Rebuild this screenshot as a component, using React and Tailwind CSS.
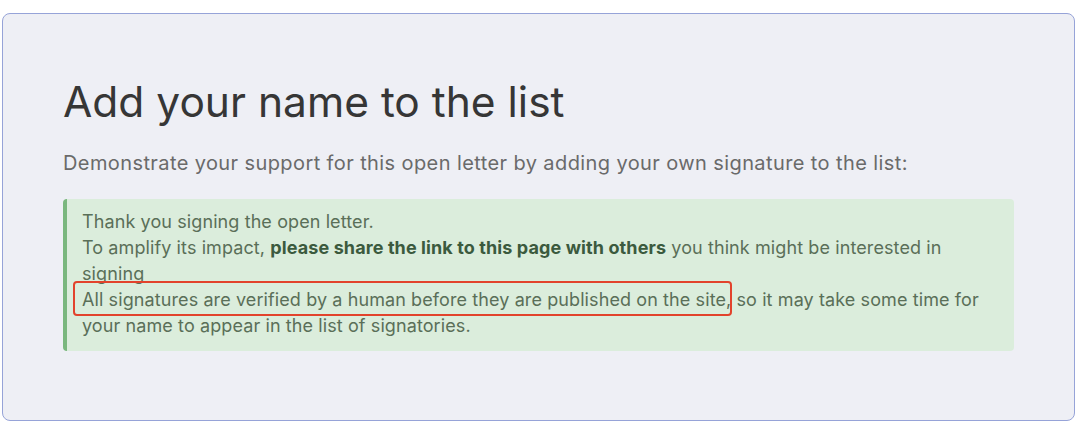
import React from "react";

const App = () => {
  return (
    <div
      className="w-[1080px] h-[429px] bg-white pt-[13px] pl-[2px]"
      style={{ fontFamily: "Inter, 'Noto Sans', sans-serif" }}
    >
      {/* Card */}
      <div className="w-[1073px] h-[408px] rounded-[8px] border border-[#96a3d8] bg-[#eeeff5] pl-[60px] pt-[64px]">
        <h2 className="text-[42.5px] leading-[48px] text-[#363636] font-normal">
          Add your name to the list
        </h2>
        <p className="mt-[24px] text-[20px] leading-[26px] tracking-[0.4px] text-[#6a6a6a]">
          Demonstrate your support for this open letter by adding your own signature to the list:
        </p>

        {/* Success message */}
        <div className="relative mt-[23px] w-[951px] rounded-[4px] border-l-4 border-[#7ab77e] bg-[#dbeddc] pl-[15px] pr-[22px] pt-[10px] pb-[12px] text-[18px] leading-[26px] tracking-[0.1px] text-[#5a6f58]">
          <p>Thank you signing the open letter.</p>
          <p>
            To amplify its impact,{" "}
            <strong className="font-bold text-[#3b5a3e]">please share the link to this page with others</strong>{" "}
            you think might be interested in signing
          </p>
          <p>
            All signatures are verified by a human before they are published on the site, so it may take some time for
            your name to appear in the list of signatories.
          </p>

          {/* Annotation highlight */}
          <div className="absolute left-[6px] top-[82px] w-[659px] h-[35px] rounded-[4px] border-2 border-[#e2432c]" />
        </div>
      </div>
    </div>
  );
};

export default App;
